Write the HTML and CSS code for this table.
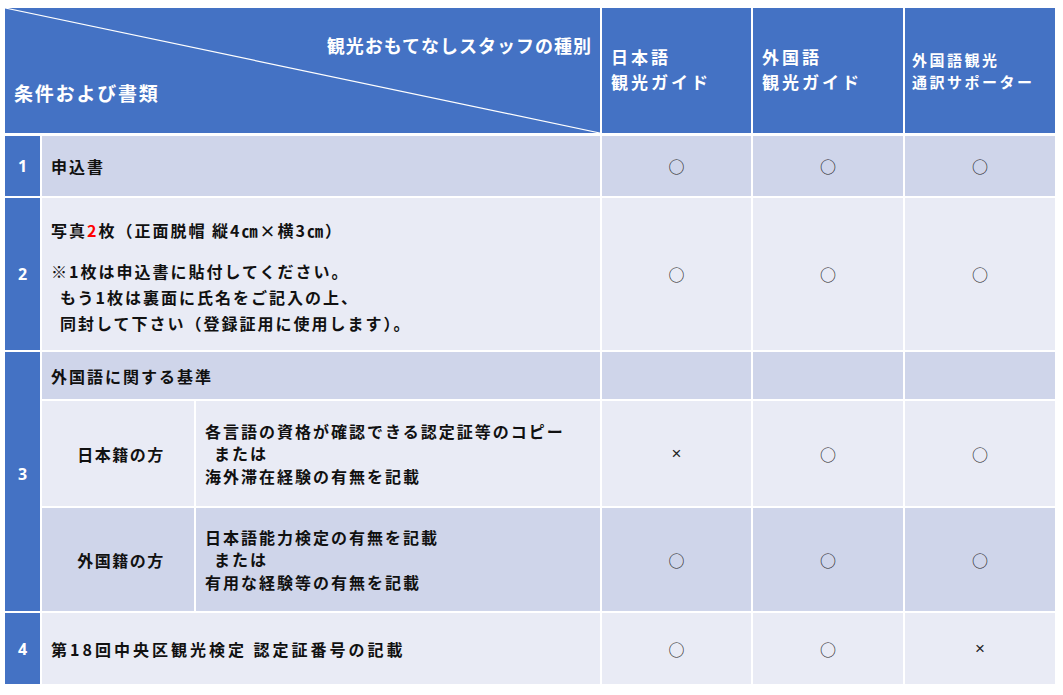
FILE: index.html
```html
<!DOCTYPE html>
<html lang="ja">
<head>
<meta charset="utf-8">
<title>観光おもてなしスタッフ 条件および書類</title>
<link rel="stylesheet" href="styles.css">
</head>
<body>
<div class="page">
  <div class="grid head">
    <div class="hcell hmain">
      <svg class="diag" viewBox="0 0 100 100" preserveAspectRatio="none"><line x1="0" y1="0" x2="100" y2="100" stroke="#ffffff" stroke-width="1.2" vector-effect="non-scaling-stroke"/></svg>
      <div class="htop">観光おもてなしスタッフの種別</div>
      <div class="hbottom">条件および書類</div>
    </div>
    <div class="hcell hcol">日本語<br>観光ガイド</div>
    <div class="hcell hcol">外国語<br>観光ガイド</div>
    <div class="hcell hcol hsmall">外国語観光<br>通訳サポーター</div>
  </div>

  <div class="grid body">
    <!-- row 1 -->
    <div class="num r1">1</div>
    <div class="txt span2 dark r1">申込書</div>
    <div class="mark dark r1">○</div>
    <div class="mark dark r1">○</div>
    <div class="mark dark r1">○</div>

    <!-- row 2 -->
    <div class="num r2">2</div>
    <div class="txt span2 light r2 photo">
      <div class="para">写真<span class="red">2</span>枚（正面脱帽 縦4㎝×横3㎝）</div>
      <div class="lines">
        <div>※1枚は申込書に貼付してください。</div>
        <div class="ind">もう1枚は裏面に氏名をご記入の上、</div>
        <div class="ind">同封して下さい（登録証用に使用します）。</div>
      </div>
    </div>
    <div class="mark light r2">○</div>
    <div class="mark light r2">○</div>
    <div class="mark light r2">○</div>

    <!-- row 3 -->
    <div class="num r3 n3">3</div>
    <div class="txt span2 dark r3a">外国語に関する基準</div>
    <div class="mark dark r3a"></div>
    <div class="mark dark r3a"></div>
    <div class="mark dark r3a"></div>

    <div class="sub light r3b">日本籍の方</div>
    <div class="txt light r3b lines2">
      <div>各言語の資格が確認できる認定証等のコピー</div>
      <div class="ind">または</div>
      <div>海外滞在経験の有無を記載</div>
    </div>
    <div class="mark light r3b"><span class="cross">×</span></div>
    <div class="mark light r3b">○</div>
    <div class="mark light r3b">○</div>

    <div class="sub dark r3c">外国籍の方</div>
    <div class="txt dark r3c lines2">
      <div>日本語能力検定の有無を記載</div>
      <div class="ind">または</div>
      <div>有用な経験等の有無を記載</div>
    </div>
    <div class="mark dark r3c">○</div>
    <div class="mark dark r3c">○</div>
    <div class="mark dark r3c">○</div>

    <!-- row 4 -->
    <div class="num r4">4</div>
    <div class="txt span2 light r4 wide">第18回中央区観光検定 認定証番号の記載</div>
    <div class="mark light r4">○</div>
    <div class="mark light r4">○</div>
    <div class="mark light r4"><span class="cross">×</span></div>
  </div>
</div>
</body>
</html>
```

FILE: styles.css
```css
* { box-sizing: border-box; }
html, body { margin: 0; padding: 0; background: #ffffff; }
body {
  font-family: "Noto Sans CJK JP", "Noto Sans", sans-serif;
  color: #111111;
}
.page {
  padding: 8px 0 0 5px;
  width: 1055px;
}
.grid {
  display: grid;
  grid-template-columns: 35px 152px 404px 149px 150px 150px;
  column-gap: 2px;
  row-gap: 2px;
  width: 1050px;
}
.head {
  height: 125px;
  margin-bottom: 3px;
}
.hcell {
  background: #4472C4;
  color: #ffffff;
  font-weight: 700;
}
.hmain {
  grid-column: 1 / span 3;
  position: relative;
  display: flex;
  flex-direction: column;
  justify-content: space-between;
  padding: 24px 8px 26px 9px;
}
.diag {
  position: absolute;
  left: 0;
  top: 0;
  width: 100%;
  height: 100%;
}
.htop {
  align-self: flex-end;
  font-size: 18px;
  letter-spacing: 1px;
  line-height: 26px;
}
.hbottom {
  font-size: 19px;
  letter-spacing: 1.8px;
  line-height: 28px;
}
.hcol {
  display: flex;
  align-items: center;
  padding: 0 0 4px 9px;
  font-size: 17px;
  letter-spacing: 3px;
  line-height: 25px;
}
.hsmall {
  padding: 0 0 0 7px;
  font-size: 15px;
  letter-spacing: 2.5px;
  line-height: 22px;
}
.body {
  grid-template-rows: 60px 152px 47px 105px 103px 71px;
}
.num {
  background: #4472C4;
  color: #ffffff;
  font-weight: 700;
  font-size: 16px;
  display: flex;
  align-items: center;
  justify-content: center;
  font-family: "Noto Sans", "Noto Sans CJK JP", sans-serif;
}
.n3 {
  grid-row: 3 / span 3;
  padding-bottom: 16px;
}
.dark { background: #CFD5EA; }
.light { background: #E9EBF5; }
.txt {
  display: flex;
  flex-direction: column;
  justify-content: center;
  padding-left: 9px;
  font-size: 16px;
  font-weight: 700;
  letter-spacing: 2px;
  line-height: 22px;
}
.photo { padding-top: 5px; }
.wide { letter-spacing: 3px; }
.span2 { grid-column: 2 / span 2; }
.para { line-height: 26px; margin-bottom: 15px; }
.lines { line-height: 26px; }
.lines2 { line-height: 22.5px; }
.ind { padding-left: 9px; }
.red { color: #FF0000; }
.sub {
  display: flex;
  align-items: center;
  justify-content: center;
  padding-left: 6px;
  font-size: 16px;
  font-weight: 700;
  letter-spacing: 1.5px;
}
.mark {
  display: flex;
  align-items: center;
  justify-content: center;
  font-size: 16px;
  color: #222222;
  font-weight: 400;
}
.cross {
  font-family: "Liberation Sans", sans-serif;
  font-size: 17px;
  color: #222222;
}
```
